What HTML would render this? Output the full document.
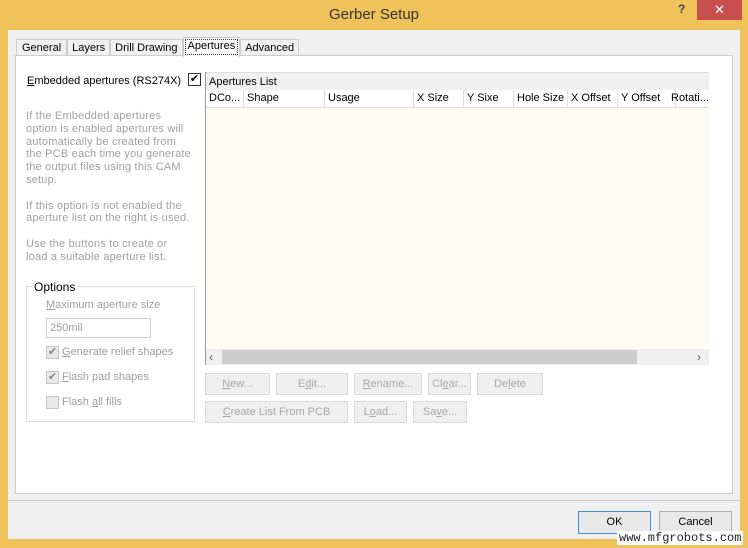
<!DOCTYPE html><html><head><style>
body{margin:0;width:748px;height:548px;background:#f0c35a;font-family:"Liberation Sans",sans-serif;font-size:11px;position:relative;overflow:hidden;color:#000}
.a{position:absolute}
.g{color:#a0a0a0}
.btn{position:absolute;background:#efefef;border:1px solid #d9d9d9;color:#a8a8a8;text-align:center;line-height:20px;height:20px;font-size:11px}
.col{position:absolute;top:0;height:17px;line-height:17px;border-right:1px solid #ddd;padding-left:3px}
.cb{position:absolute;width:11px;height:11px;border:1px solid #c8c8c8;background:#e8e8e8;color:#888;font-size:11px;line-height:11px;text-align:center}
</style></head><body>
<div class="a" style="left:0;top:0;width:748px;text-align:center;top:6px;font-size:15px;color:#333">Gerber Setup</div>
<div class="a" style="left:678px;top:2px;font-size:12px;font-weight:bold;color:#444">?</div>
<div class="a" style="left:697px;top:0;width:45px;height:20px;background:#c7504e;color:#fff;text-align:center;line-height:20px;font-size:13px">✕</div>
<div class="a" style="left:8px;top:30px;width:732px;height:509px;background:#f0f0f0"></div>
<div class="a" style="left:15px;top:55px;width:716px;height:437px;background:#fff;border:1px solid #ccc"></div>
<div class="a" style="left:16px;top:39px;height:16px;line-height:16px;display:flex">
<div style="border:1px solid #ccc;border-bottom:none;padding:0 5px;background:#f0f0f0">General</div>
<div style="border:1px solid #ccc;border-bottom:none;padding:0 4px;background:#f0f0f0">Layers</div>
<div style="border:1px solid #ccc;border-bottom:none;padding:0 4px;background:#f0f0f0">Drill Drawing</div>
<div style="border:1px solid #ccc;border-bottom:none;padding:0 4px;background:#fff;margin-top:-2px;height:19px;outline:1px dotted #333;outline-offset:-3px">Apertures</div>
<div style="border:1px solid #ccc;border-bottom:none;padding:0 4px;background:#f0f0f0">Advanced</div>
</div>
<div class="a" style="left:27px;top:75px"><u>E</u>mbedded apertures (RS274X)</div>
<div class="a" style="left:188px;top:73px;width:11px;height:11px;border:1px solid #333;font-size:11px;line-height:11px;text-align:center">✔</div>
<div class="a g" style="left:26px;top:110px;width:185px;line-height:12.8px;letter-spacing:0.2px">If the Embedded apertures<br>option is enabled apertures will<br>automatically be created from<br>the PCB each time you generate<br>the output files using this CAM<br>setup.<br><br>If this option is not enabled the<br>aperture list on the right is used.<br><br>Use the buttons to create or<br>load a suitable aperture list.</div>
<div class="a" style="left:26px;top:286px;width:167px;height:134px;border:1px solid #ddd"></div>
<div class="a" style="left:32px;top:280px;background:#fff;padding:0 2px;font-size:12px">Options</div>
<div class="a g" style="left:46px;top:299px"><u>M</u>aximum aperture size</div>
<div class="a g" style="left:46px;top:318px;width:100px;height:18px;border:1px solid #ccc;line-height:18px;padding-left:3px">250mil</div>
<div class="cb" style="left:46px;top:346px">✔</div><div class="a g" style="left:62px;top:346px"><u>G</u>enerate relief shapes</div>
<div class="cb" style="left:46px;top:371px">✔</div><div class="a g" style="left:62px;top:371px"><u>F</u>lash pad shapes</div>
<div class="cb" style="left:46px;top:396px"></div><div class="a g" style="left:62px;top:396px">Flash <u>a</u>ll fills</div>
<div class="a" style="left:205px;top:72px;width:504px;height:293px;border-left:1px solid #999;background:#fffcf5"></div>
<div class="a" style="left:206px;top:72px;width:503px;height:18px;background:#f0f0f0;line-height:18px;padding-left:3px;box-sizing:border-box;border-top:1px solid #ddd">Apertures List</div>
<div class="a" style="left:206px;top:90px;width:503px;height:17px;background:#fff;border-bottom:1px solid #ddd">
<div class="col" style="left:0;width:34px">DCo...</div><div class="col" style="left:38px;width:77px">Shape</div><div class="col" style="left:119px;width:85px">Usage</div><div class="col" style="left:208px;width:46px">X Size</div><div class="col" style="left:258px;width:46px">Y Sixe</div><div class="col" style="left:308px;width:50px">Hole Size</div><div class="col" style="left:362px;width:46px">X Offset</div><div class="col" style="left:412px;width:54px">Y Offset</div><div class="col" style="left:462px;width:40px;border:none">Rotati...</div></div>
<div class="a" style="left:206px;top:349px;width:503px;height:16px;background:#f0f0f0"></div>
<div class="a" style="left:222px;top:350px;width:415px;height:14px;background:#cdcdcd"></div>
<div class="a" style="left:209px;top:349px;font-size:12px;line-height:16px;color:#555">‹</div>
<div class="a" style="left:697px;top:349px;font-size:12px;line-height:16px;color:#555">›</div>
<div class="btn" style="left:205px;top:373px;width:63px"><u>N</u>ew...</div>
<div class="btn" style="left:276px;top:373px;width:70px">E<u>d</u>it...</div>
<div class="btn" style="left:354px;top:373px;width:66px"><u>R</u>ename...</div>
<div class="btn" style="left:428px;top:373px;width:41px">Cl<u>e</u>ar...</div>
<div class="btn" style="left:477px;top:373px;width:64px">De<u>l</u>ete</div>
<div class="btn" style="left:205px;top:401px;width:141px"><u>C</u>reate List From PCB</div>
<div class="btn" style="left:354px;top:401px;width:51px">L<u>o</u>ad...</div>
<div class="btn" style="left:413px;top:401px;width:52px">Sa<u>v</u>e...</div>
<div class="a" style="left:8px;top:500px;width:732px;border-top:1px solid #ccc"></div>
<div class="btn" style="left:578px;top:511px;width:71px;height:21px;border-color:#3c8fd8;background:#e8e8e8;color:#000">OK</div>
<div class="btn" style="left:659px;top:511px;width:71px;height:21px;border-color:#adadad;background:#e8e8e8;color:#000">Cancel</div>
<div class="a" style="left:617px;top:531px;font-family:'Liberation Mono',monospace;font-size:12px;color:#222;background:#fff;padding:0 2px">www.mfgrobots.com</div>
</body></html>
